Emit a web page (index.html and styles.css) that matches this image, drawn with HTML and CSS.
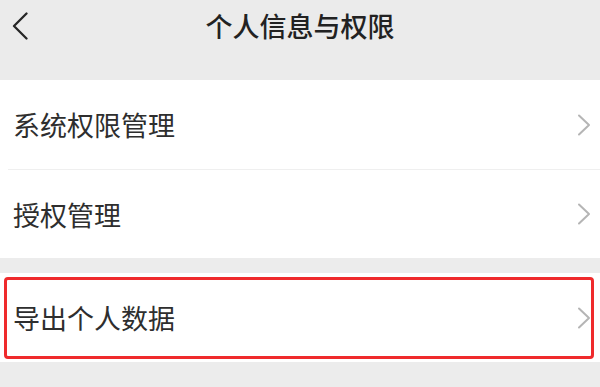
FILE: index.html
```html
<!DOCTYPE html>
<html lang="zh-CN">
<head>
<meta charset="utf-8">
<title>个人信息与权限</title>
<link rel="stylesheet" href="styles.css">
</head>
<body>
<div class="page">
  <header class="header">
    <div class="bar">
      <div class="back">
        <svg width="16" height="28" viewBox="0 0 16 28"><path d="M14.5 1.5 L2 14 L14.5 26.5" fill="none" stroke="#262626" stroke-width="2.3" stroke-linecap="round" stroke-linejoin="round"/></svg>
      </div>
      <h1 class="title">个人信息与权限</h1>
      <div class="spacer"></div>
    </div>
  </header>
  <section class="group">
    <div class="row row-first">
      <span class="label">系统权限管理</span>
      <svg class="arrow" width="14" height="22" viewBox="0 0 14 22"><path d="M2 1.5 L12 11 L2 20.5" fill="none" stroke="#b5b5b5" stroke-width="2" stroke-linecap="round" stroke-linejoin="round"/></svg>
    </div>
    <div class="divider"></div>
    <div class="row row-second">
      <span class="label">授权管理</span>
      <svg class="arrow" width="14" height="22" viewBox="0 0 14 22"><path d="M2 1.5 L12 11 L2 20.5" fill="none" stroke="#b5b5b5" stroke-width="2" stroke-linecap="round" stroke-linejoin="round"/></svg>
    </div>
  </section>
  <section class="group group-export">
    <div class="row row-export highlighted">
      <span class="label">导出个人数据</span>
      <svg class="arrow" width="14" height="22" viewBox="0 0 14 22"><path d="M2 1.5 L12 11 L2 20.5" fill="none" stroke="#b5b5b5" stroke-width="2" stroke-linecap="round" stroke-linejoin="round"/></svg>
    </div>
  </section>
</div>
</body>
</html>
```
FILE: styles.css
```css
html, body {
  margin: 0;
  padding: 0;
}
body {
  background: #ececec;
  font-family: "Noto Sans CJK SC", "Noto Sans", sans-serif;
  color: #2b2b2b;
}
.page {
  width: 600px;
  height: 387px;
  overflow: hidden;
  background: #ececec;
}
.header {
  height: 80px;
  box-sizing: border-box;
  background: #ebebeb;
}
.bar {
  height: 51px;
  display: grid;
  grid-template-columns: 1fr auto 1fr;
  align-items: center;
}
.back {
  padding-left: 12px;
  display: flex;
  align-items: center;
}
.back svg {
  display: block;
}
.title {
  margin: 0;
  font-size: 27px;
  font-weight: 500;
  line-height: 51px;
  color: #222;
}
.group {
  background: #fff;
}
.group-export {
  margin-top: 15px;
}
.row {
  display: flex;
  align-items: center;
  justify-content: space-between;
  padding: 0 9px 0 13px;
}
.row-first {
  height: 89px;
}
.row-second {
  height: 88px;
}
.row-export {
  height: 89px;
}
.label {
  font-size: 27px;
  line-height: 1;
  color: #2e2e2e;
}
.arrow {
  display: block;
}
.divider {
  height: 1px;
  margin-left: 8px;
  background: #efefef;
}
.highlighted {
  position: relative;
}
.highlighted::after {
  content: "";
  position: absolute;
  top: 4px;
  left: 4px;
  right: 6px;
  bottom: 3px;
  border: 3px solid #ef2a2c;
  border-radius: 4px;
}
```
